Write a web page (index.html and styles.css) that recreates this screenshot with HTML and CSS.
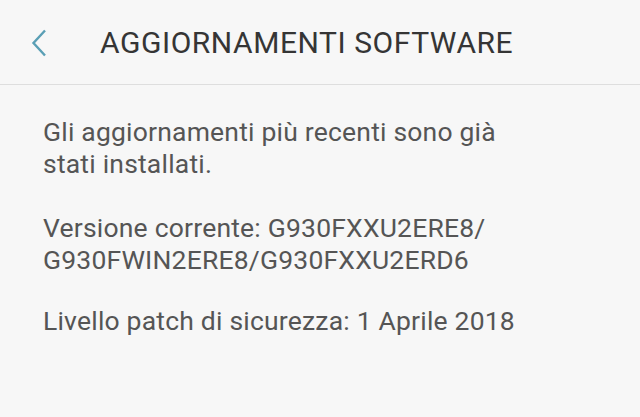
FILE: index.html
```html
<!DOCTYPE html>
<html lang="it">

<head>
    <meta charset="UTF-8">
    <meta name="viewport" content="width=device-width, initial-scale=1.0">
    <title>Aggiornamenti software</title>
    <link rel="stylesheet" href="styles.css">
</head>

<body>
    <header class="app-bar">
        <button class="back-btn" aria-label="Indietro">
            <svg width="16" height="28" viewBox="0 0 16 28">
                <polyline points="14,1.5 2.5,14 14,26.5" fill="none" stroke="#5a9fb5" stroke-width="2.4" />
            </svg>
        </button>
        <h1 class="title">AGGIORNAMENTI SOFTWARE</h1>
    </header>

    <main class="content">
        <p>Gli aggiornamenti più recenti sono già<br>stati installati.</p>
        <p class="version">Versione corrente: G930FXXU2ERE8/<br>G930FWIN2ERE8/G930FXXU2ERD6</p>
        <p>Livello patch di sicurezza: 1 Aprile 2018</p>
    </main>
</body>

</html>
```

FILE: styles.css
```css
body {
    margin: 0;
    background-color: #f7f7f7;
    font-family: Roboto, "Liberation Sans", sans-serif;
}

.app-bar {
    display: flex;
    align-items: center;
    height: 84px;
    border-bottom: 1px solid #dedede;
}

.back-btn {
    display: flex;
    align-items: center;
    border: none;
    background: none;
    padding: 0;
    margin-left: 31px;
    margin-top: 1px;
}

.title {
    margin: 0 0 0 53px;
    font-size: 30px;
    font-weight: 400;
    color: #353535;
    letter-spacing: 0.55px;
}

.content {
    padding: 31px 43px 0;
    color: #555;
    font-size: 26.5px;
    line-height: 32px;
    letter-spacing: 0.2px;
}

.content p {
    margin: 0 0 32px;
}

.content .version {
    margin-bottom: 29px;
}
```
